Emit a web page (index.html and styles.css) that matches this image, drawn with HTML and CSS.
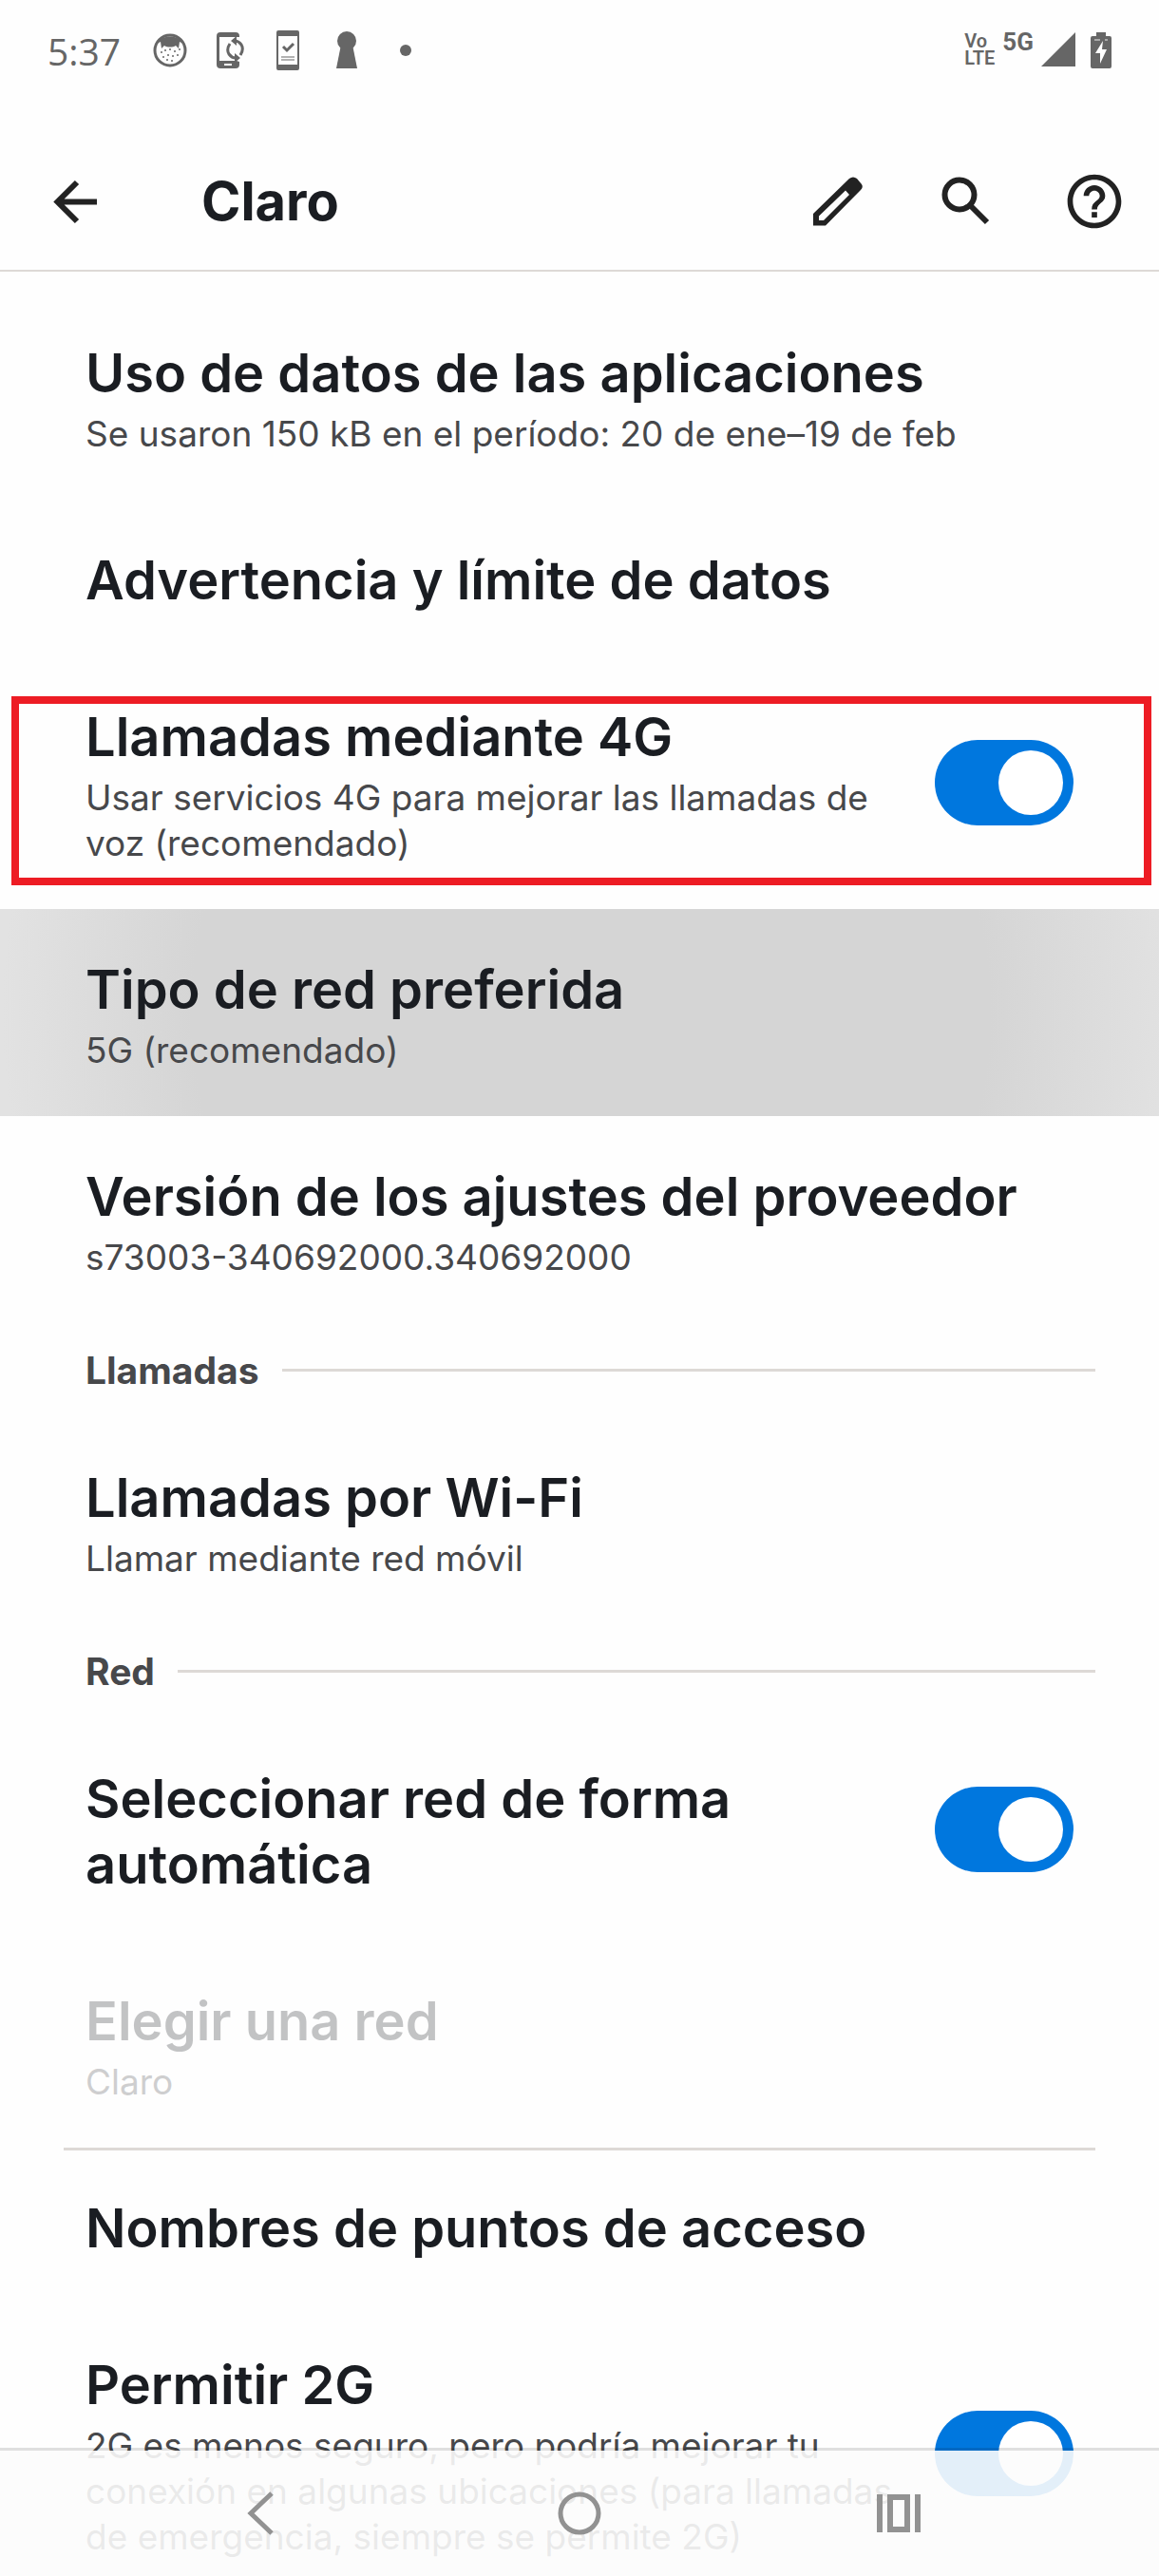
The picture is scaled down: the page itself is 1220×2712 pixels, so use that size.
FILE: index.html
```html
<!DOCTYPE html>
<html lang="es">
<head>
    <meta charset="UTF-8">
    <meta name="viewport" content="width=device-width, initial-scale=1.0">
    <title>Claro</title>
    <link rel="stylesheet" href="styles.css">
</head>
<body>
    <div class="screen">
        <!-- Status bar -->
        <div class="status-bar">
            <span class="clock">5:37</span>
            <div class="notifications">
                <svg viewBox="0 0 44 44" width="44" height="44">
                    <circle cx="22" cy="22" r="16" fill="none" stroke="currentColor" stroke-width="3"/>
                    <path d="M8 15C12 5 32 5 36 15L32 13L31 20L28 17C25 19 19 19 16 17L13 20L12 13Z" fill="currentColor"/>
                    <g fill="currentColor">
                        <circle cx="13" cy="24" r="1"/><circle cx="17" cy="22" r="1"/><circle cx="22" cy="21" r="1"/>
                        <circle cx="27" cy="23" r="1"/><circle cx="32" cy="21" r="1"/><circle cx="20" cy="27" r="1"/>
                        <circle cx="25" cy="28" r="1"/><circle cx="30" cy="27" r="1"/><circle cx="15" cy="29" r="1"/>
                        <circle cx="24" cy="33" r="1"/><circle cx="19" cy="32" r="1"/>
                    </g>
                </svg>
                <svg viewBox="0 0 44 44" width="44" height="44">
                    <path d="M33 8V7Q33 3 29 3H13Q9 3 9 7V37Q9 41 13 41H29Q33 41 33 37V34L30 33H12V8Z" fill="currentColor"/>
                    <path d="M17 37H25" stroke="#fff" stroke-width="2"/>
                    <path d="M23 15Q19 21 22 26Q25 30 29 30M34 27Q38 21 35 16Q32 12 28 12" fill="none" stroke="currentColor" stroke-width="3"/>
                    <path d="M24 12L30 7V17ZM34 30L28 25V35Z" fill="currentColor"/>
                </svg>
                <svg viewBox="0 0 44 44" width="44" height="44">
                    <path d="M12 1H32Q34 1 34 3V41Q34 43 32 43H12Q10 43 10 41V3Q10 1 12 1ZM12 7V37H32V7Z" fill="currentColor" fill-rule="evenodd"/>
                    <path d="M17 18L21 22L28 15" fill="none" stroke="currentColor" stroke-width="3"/>
                    <path d="M15 29H29M15 32H29" stroke="currentColor" stroke-width="1"/>
                </svg>
                <svg viewBox="0 0 44 44" width="44" height="44">
                    <circle cx="22" cy="12" r="10" fill="currentColor"/>
                    <path d="M16 16H28L33 41H11Z" fill="currentColor"/>
                </svg>
                <svg viewBox="0 0 44 44" width="44" height="44">
                    <circle cx="22" cy="22" r="6" fill="currentColor"/>
                </svg>
            </div>
            <div class="signals">
                <span class="volte">Vo<br>LTE</span>
                <span class="network">5G</span>
                <svg viewBox="0 0 36 36" width="36" height="36">
                    <path d="M36 0V36H0Z" fill="currentColor"/>
                </svg>
                <svg class="battery" viewBox="0 0 22 38" width="22" height="38">
                    <path d="M6 0H16V4H20Q22 4 22 6V36Q22 38 20 38H2Q0 38 0 36V6Q0 4 2 4H6Z" fill="currentColor"/>
                    <path d="M4 8H10M15 8H18" stroke="#aaa" stroke-width="2"/>
                    <path d="M13 9L5 22H10V33L17 18H12Z" fill="#fff"/>
                </svg>
            </div>
        </div>

        <!-- App bar -->
        <header class="app-bar">
            <button class="icon-button" type="button" aria-label="Atrás">
                <svg viewBox="0 0 68 68" width="68" height="68">
                    <path d="M35 14L14.500 34.500L35 55M14 34.500H56" fill="none" stroke="currentColor" stroke-width="6"/>
                </svg>
            </button>
            <h1>Claro</h1>
            <div class="actions">
                <button class="icon-button" type="button" aria-label="Editar">
                    <svg viewBox="0 0 68 68" width="68" height="68">
                        <path d="M10 47L48 10Q52 7 56 10L61 16Q63 19 60 22L23 59.500H10ZM16 49.500V54H21L48 27L44 22.500Z" fill="currentColor" fill-rule="evenodd"/>
                    </svg>
                </button>
                <button class="icon-button" type="button" aria-label="Buscar">
                    <svg viewBox="0 0 68 68" width="68" height="68" fill="none" stroke="currentColor" stroke-width="6">
                        <circle cx="28" cy="27" r="15.500"/>
                        <path d="M39 38L57 56"/>
                    </svg>
                </button>
                <button class="icon-button" type="button" aria-label="Ayuda">
                    <svg viewBox="0 0 24 24" width="68" height="68">
                        <path d="M11 18h2v-2h-2v2zm1-16C6.480 2 2 6.480 2 12s4.480 10 10 10 10-4.480 10-10S17.520 2 12 2zm0 18c-4.410 0-8-3.590-8-8s3.590-8 8-8 8 3.590 8 8-3.590 8-8 8zm0-14c-2.210 0-4 1.790-4 4h2c0-1.100.9-2 2-2s2 .9 2 2c0 2-3 1.750-3 5h2c0-2.250 3-2.500 3-5 0-2.210-1.790-4-4-4z" fill="currentColor"/>
                    </svg>
                </button>
            </div>
        </header>

        <!-- Settings list -->
        <main class="settings">
            <a class="row" href="#uso">
                <span class="text">
                    <span class="title">Uso de datos de las aplicaciones</span>
                    <span class="summary">Se usaron 150 kB en el período: 20 de ene–19 de feb</span>
                </span>
            </a>
            <a class="row" href="#limite">
                <span class="text">
                    <span class="title">Advertencia y límite de datos</span>
                </span>
            </a>
            <label class="row highlighted">
                <span class="text">
                    <span class="title">Llamadas mediante 4G</span>
                    <span class="summary">Usar servicios 4G para mejorar las llamadas de voz (recomendado)</span>
                </span>
                <input class="switch" type="checkbox" role="switch" checked>
            </label>
            <a class="row pressed" href="#tipo">
                <span class="text">
                    <span class="title">Tipo de red preferida</span>
                    <span class="summary">5G (recomendado)</span>
                </span>
            </a>
            <a class="row" href="#version">
                <span class="text">
                    <span class="title">Versión de los ajustes del proveedor</span>
                    <span class="summary">s73003-340692000.340692000</span>
                </span>
            </a>

            <h2 class="category">Llamadas</h2>
            <a class="row" href="#wifi">
                <span class="text">
                    <span class="title">Llamadas por Wi-Fi</span>
                    <span class="summary">Llamar mediante red móvil</span>
                </span>
            </a>

            <h2 class="category">Red</h2>
            <label class="row">
                <span class="text">
                    <span class="title">Seleccionar red de forma automática</span>
                </span>
                <input class="switch" type="checkbox" role="switch" checked>
            </label>
            <a class="row disabled" href="#elegir" aria-disabled="true">
                <span class="text">
                    <span class="title">Elegir una red</span>
                    <span class="summary">Claro</span>
                </span>
            </a>
            <a class="row divided" href="#apn">
                <span class="text">
                    <span class="title">Nombres de puntos de acceso</span>
                </span>
            </a>
            <label class="row">
                <span class="text">
                    <span class="title">Permitir 2G</span>
                    <span class="summary">2G es menos seguro, pero podría mejorar tu conexión en algunas ubicaciones (para llamadas de emergencia, siempre se permite 2G)</span>
                </span>
                <input class="switch" type="checkbox" role="switch" checked>
            </label>
        </main>

        <!-- System navigation, drawn over the list -->
        <nav class="nav-bar">
            <button type="button" aria-label="Atrás">
                <svg viewBox="0 0 48 48" width="48" height="48">
                    <path d="M36 3L14 24L36 45" fill="none" stroke="currentColor" stroke-width="5"/>
                </svg>
            </button>
            <button type="button" aria-label="Inicio">
                <svg viewBox="0 0 48 48" width="48" height="48">
                    <circle cx="24" cy="24" r="20" fill="none" stroke="currentColor" stroke-width="5"/>
                </svg>
            </button>
            <button type="button" aria-label="Recientes">
                <svg viewBox="0 0 48 48" width="48" height="48">
                    <path d="M4 4V44M44 4V44M15 7H33V41H15Z" fill="none" stroke="currentColor" stroke-width="6"/>
                </svg>
            </button>
        </nav>
    </div>
</body>
</html>
```
FILE: styles.css
```css
:root {
    --text-color: #1a1d22;
    --summary-color: #47484b;
    --status-color: #666;
    --line-color: #ddd9d6;
    --accent-color: #0077de;
    --highlight-color: #ed1c24;
}

* {
    box-sizing: border-box;
}

body {
    margin: 0;
    font-family: Inter, "Liberation Sans", sans-serif;
    color: var(--text-color);
    background-color: #fefefe;
}

button {
    padding: 0;
    border: 0;
    background: none;
    color: inherit;
}

svg {
    display: block;
}

.screen {
    position: relative;
    display: flex;
    flex-direction: column;
    height: 100vh;
    overflow: hidden;
}

/* Status bar */
.status-bar {
    display: flex;
    flex: none;
    align-items: center;
    height: 106px;
    padding: 0 50px;
    color: var(--status-color);
}

.clock {
    width: 107px;
    font-family: "Open Sans", sans-serif;
    font-size: 39px;
}

.notifications {
    display: flex;
    gap: 18px;
}

.signals {
    display: flex;
    gap: 8px;
    margin-left: auto;
    font-family: Roboto, sans-serif;
}

.volte {
    font-size: 20px;
    font-weight: 600;
    line-height: 18px;
}

.network {
    font-size: 26px;
    font-weight: 700;
    line-height: 20px;
}

.battery {
    margin-left: 8px;
}

/* App bar */
.app-bar {
    display: flex;
    flex: none;
    align-items: center;
    height: 180px;
    padding: 34px 34px 0 46px;
    border-bottom: 2px solid var(--line-color);
}

.app-bar h1 {
    margin: 0 0 0 98px;
    font-size: 56px;
    font-weight: 700;
    line-height: 68px;
}

.icon-button {
    color: #222;
}

.actions {
    display: flex;
    gap: 68px;
    margin-left: auto;
}

/* Settings list */
.settings {
    flex: 1;
    min-height: 0;
    padding-top: 22px;
    overflow: hidden;
}

.row {
    position: relative;
    display: flex;
    align-items: center;
    gap: 24px;
    padding: 45px 90px;
    color: inherit;
    text-decoration: none;
}

.text {
    flex: 1;
    padding-top: 6px;
}

.title,
.summary {
    display: block;
}

.title {
    font-size: 56px;
    font-weight: 600;
    line-height: 69px;
}

.summary {
    margin-top: 5px;
    font-size: 37px;
    line-height: 48px;
    color: var(--summary-color);
}

.row.pressed {
    background: radial-gradient(circle at 51% 50%, #d5d5d5 420px, #e2e2e2 620px);
}

.row.disabled .text {
    opacity: 0.26;
}

.row.highlighted::after {
    content: "";
    position: absolute;
    top: 42px;
    right: 8px;
    bottom: 25px;
    left: 12px;
    border: 8px solid var(--highlight-color);
}

.row.divided::before {
    content: "";
    position: absolute;
    top: 0;
    right: 67px;
    left: 67px;
    height: 3px;
    background-color: var(--line-color);
}

.category {
    display: flex;
    align-items: center;
    gap: 24px;
    height: 99px;
    margin: 0;
    padding: 0 67px 0 90px;
    font-size: 39px;
    font-weight: 700;
    color: var(--summary-color);
}

.category::after {
    content: "";
    flex: 1;
    height: 3px;
    background-color: var(--line-color);
}

.switch {
    appearance: none;
    flex: none;
    display: flex;
    align-items: center;
    justify-content: flex-end;
    width: 146px;
    height: 90px;
    margin: 0;
    padding: 11px;
    border-radius: 45px;
    background-color: #c4c4c4;
}

.switch::before {
    content: "";
    width: 68px;
    height: 68px;
    border-radius: 50%;
    background-color: #fff;
}

.switch:checked {
    background-color: var(--accent-color);
}

.switch:not(:checked) {
    justify-content: flex-start;
}

/* System navigation */
.nav-bar {
    position: absolute;
    right: 0;
    bottom: 0;
    left: 0;
    display: grid;
    grid-template-columns: repeat(3, 1fr);
    height: 135px;
    padding: 0 106px;
    border-top: 3px solid rgba(0, 0, 0, 0.12);
    background-color: rgba(252, 252, 252, 0.9);
    background-clip: padding-box;
}

.nav-bar button {
    display: grid;
    place-items: center;
    color: #929292;
}
```
